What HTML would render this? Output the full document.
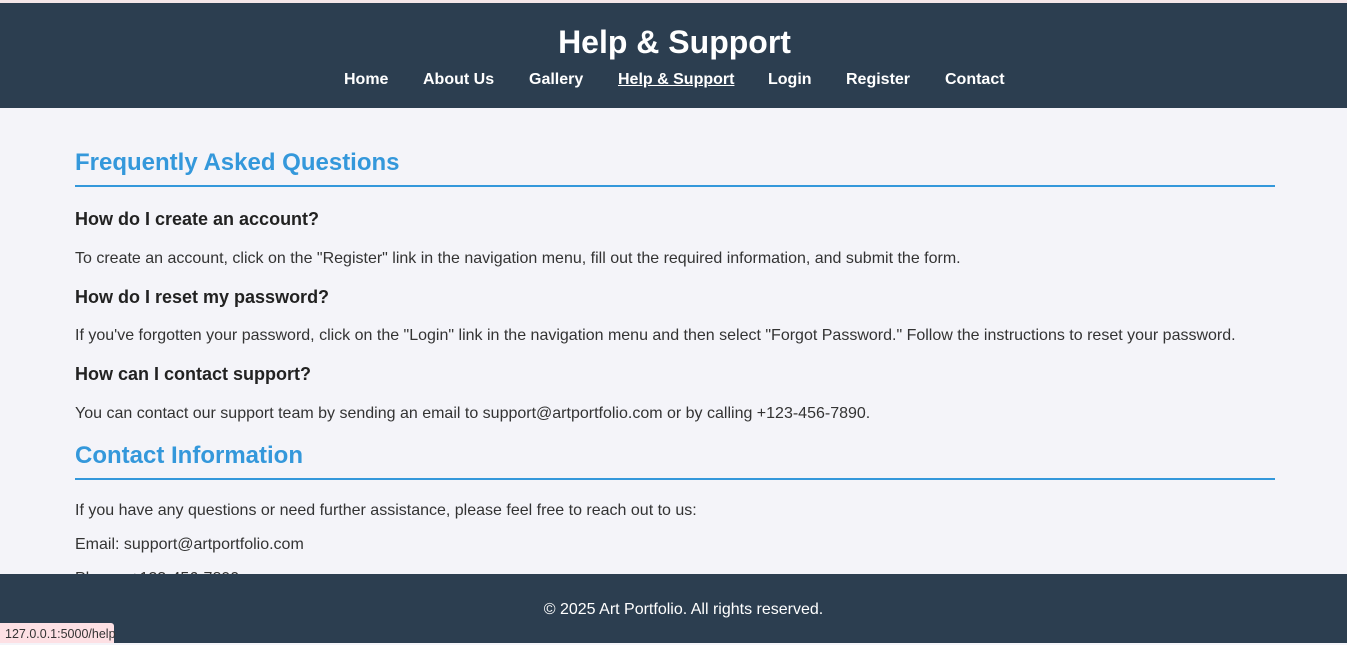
<!DOCTYPE html>
<html><head><style>
body{margin:0;width:1347px;height:643px;overflow:hidden;background:#f4f4f9;font-family:"Liberation Sans",Arial,sans-serif;color:#333;position:relative}
.a{position:absolute;white-space:nowrap}
#top{position:absolute;left:0;top:0;width:1347px;height:3px;background:#f4e6e8}
header{position:absolute;left:0;top:3px;width:1347px;height:105px;background:#2c3e50}
.nav{font-size:16px;font-weight:bold;color:#fff;top:71px}
h2{margin:0;font-size:24px;color:#3498db}
.line{position:absolute;left:75px;width:1200px;height:2px;background:#3498db}
.q{font-size:18px;font-weight:bold;color:#222}
.p{font-size:16px;color:#333}
footer{position:absolute;left:0;top:574px;width:1347px;height:69px;background:#2c3e50}
</style></head><body>
<div id="top"></div>
<header></header>
<div class="a" style="left:1px;width:1347px;text-align:center;top:24px;font-size:32px;font-weight:bold;color:#fff">Help &amp; Support</div>
<div class="a nav" style="left:344px">Home</div>
<div class="a nav" style="left:423px">About Us</div>
<div class="a nav" style="left:529px">Gallery</div>
<div class="a nav" style="left:618px;text-decoration:underline">Help &amp; Support</div>
<div class="a nav" style="left:768px">Login</div>
<div class="a nav" style="left:846px">Register</div>
<div class="a nav" style="left:945px">Contact</div>

<div class="a" style="left:75px;top:149px"><h2>Frequently Asked Questions</h2></div>
<div class="line" style="top:185px"></div>
<div class="a q" style="left:75px;top:209px">How do I create an account?</div>
<div class="a p" style="left:75px;top:250px">To create an account, click on the "Register" link in the navigation menu, fill out the required information, and submit the form.</div>
<div class="a q" style="left:75px;top:287px">How do I reset my password?</div>
<div class="a p" style="left:75px;top:327px">If you've forgotten your password, click on the "Login" link in the navigation menu and then select "Forgot Password." Follow the instructions to reset your password.</div>
<div class="a q" style="left:75px;top:364px">How can I contact support?</div>
<div class="a p" style="left:75px;top:405px">You can contact our support team by sending an email to support@artportfolio.com or by calling +123-456-7890.</div>
<div class="a" style="left:75px;top:442px"><h2>Contact Information</h2></div>
<div class="line" style="top:478px"></div>
<div class="a p" style="left:75px;top:502px">If you have any questions or need further assistance, please feel free to reach out to us:</div>
<div class="a p" style="left:75px;top:536px">Email: support@artportfolio.com</div>
<div class="a p" style="left:75px;top:570px">Phone: +123-456-7890</div>
<footer></footer>
<div class="a" style="left:10px;width:1347px;text-align:center;top:601px;font-size:16px;color:#fff">© 2025 Art Portfolio. All rights reserved.</div>
<div class="a" style="left:0;top:623px;height:20px;width:114px;background:#fde0e4;border-radius:0 3px 0 0;font-size:12.5px;color:#333;line-height:22px;padding-left:5px;box-sizing:border-box">127.0.0.1:5000/help</div>
</body></html>
